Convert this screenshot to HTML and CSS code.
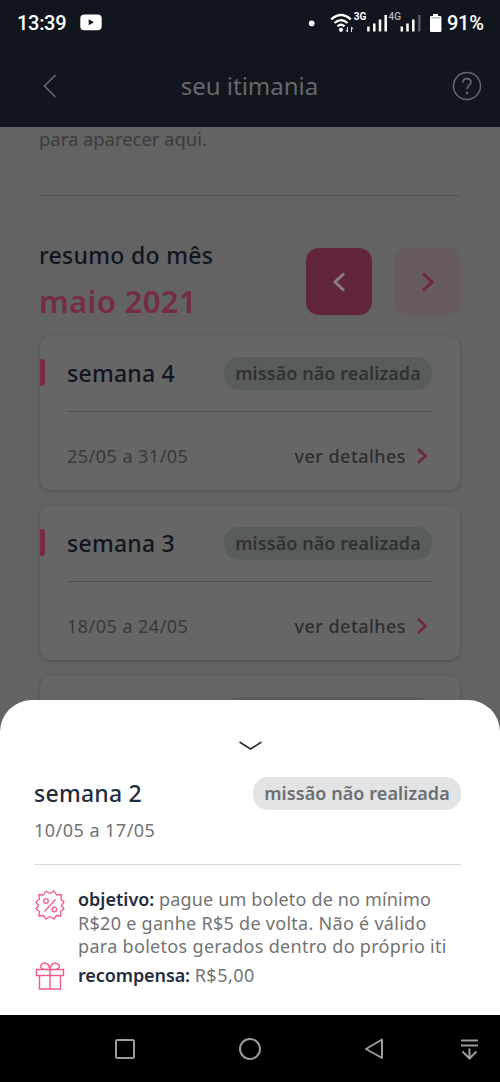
FILE: index.html
```html
<!DOCTYPE html>
<html lang="pt-BR">
<head>
<meta charset="utf-8">
<title>seu itimania</title>
<link rel="stylesheet" href="styles.css">
</head>
<body>
<div class="phone">
  <header class="top">
    <div class="status">
      <span class="clock">13:39</span>
      <svg class="yt" width="22" height="17" viewBox="0 0 22 17"><rect x=".3" y=".5" width="21.4" height="15.8" rx="4" fill="#fff"/><path d="M8.700 5.300v6l5.200-3z" fill="#11151d"/></svg>
      <svg class="signals" width="136" height="26" viewBox="308 9 136 26">
        <circle cx="311.700" cy="22.400" r="2.800" fill="#fff"/>
        <g fill="none" stroke="#fff" stroke-width="2.300"><path d="M331.300 18.300Q341 9.800 350.800 18.300M334.500 22Q341 16.200 347.500 22M337.500 25.300Q341 22.200 344.500 25.300"/></g>
        <circle cx="341" cy="28.800" r="2.100" fill="#fff"/>
        <path d="M347.500 26v5M351.500 31v-5M346 29l1.500 2M351.500 26l1.500 2" stroke="#ddd" stroke-width="1" fill="none"/>
        <text class="net net-strong" x="353.800" y="19">3G</text>
        <text class="net" x="388.500" y="19">4G</text>
        <path d="M368.400 30.500v-5M374.300 30.500v-8M380 30.500v-12M385.700 30.500v-16.500M401.800 30.500v-5M407.500 30.500v-8M413.300 30.500v-12" stroke="#fff" stroke-width="2.500"/>
        <path d="M419.300 30.500v-16.500" stroke="#555961" stroke-width="2.500"/>
        <path d="M433 13h5v2h2.200a1.200 1.200 0 0 1 1.200 1.200v13.600a1.200 1.200 0 0 1-1.200 1.200h-9a1.200 1.200 0 0 1-1.200-1.200V16.200a1.200 1.200 0 0 1 1.200-1.200h1.800z" fill="#fff"/><path d="M431.500 16.800h8.500" stroke="#777a80" stroke-width=".8"/>
      </svg>
      <span class="battery">91%</span>
    </div>
    <div class="appbar">
      <svg width="14" height="24" viewBox="0 0 14 24"><path d="M12.500 1L1.500 12l11 11" fill="none" stroke="#67696c" stroke-width="1.600"/></svg>
      <h1 class="title">seu itimania</h1>
      <svg width="30" height="30" viewBox="0 0 30 30" fill="none" stroke="#67696c" stroke-width="1.500"><circle cx="15" cy="15" r="13.500"/><path d="M11 11.500C11 6.300 19 6.300 19 11.300C19 14.300 15 14.200 15 18.200" stroke-width="1.700"/><circle cx="15" cy="22" r=".6"/></svg>
    </div>
  </header>

  <main class="page">
    <p class="intro">para aparecer aqui.</p>
    <section class="month">
      <div>
        <h2 class="summary">resumo do mês</h2>
        <p class="current">maio 2021</p>
      </div>
      <div class="pager">
        <button class="prev" aria-label="mês anterior"><svg width="14" height="20" viewBox="0 0 14 20"><path d="M12 1.500L3 10l9 8.500" fill="none" stroke="#8c7c83" stroke-width="3"/></svg></button>
        <button class="next" aria-label="próximo mês"><svg width="14" height="20" viewBox="0 0 14 20"><path d="M2 1.500L11 10l-9 8.500" fill="none" stroke="#702842" stroke-width="3"/></svg></button>
      </div>
    </section>
    <article class="card">
      <div class="card-head"><h3 class="week">semana 4</h3><span class="pill">missão não realizada</span></div>
      <div class="card-foot"><span class="dates">25/05 a 31/05</span><a class="details">ver detalhes<svg width="12" height="18" viewBox="0 0 12 18"><path d="M2 2l7.500 7L2 16" fill="none" stroke="#702842" stroke-width="2.700"/></svg></a></div>
    </article>
    <article class="card">
      <div class="card-head"><h3 class="week">semana 3</h3><span class="pill">missão não realizada</span></div>
      <div class="card-foot"><span class="dates">18/05 a 24/05</span><a class="details">ver detalhes<svg width="12" height="18" viewBox="0 0 12 18"><path d="M2 2l7.500 7L2 16" fill="none" stroke="#702842" stroke-width="2.700"/></svg></a></div>
    </article>
    <article class="card card-last"><div class="card-head"><span class="pill pill-blank"></span></div></article>
  </main>

  <section class="sheet">
    <svg class="handle" width="24" height="12" viewBox="0 0 24 12"><path d="M1 2l11 7 11-7" fill="none" stroke="#2b2b2b" stroke-width="1.500"/></svg>
    <div class="sheet-head"><h3 class="week">semana 2</h3><span class="pill">missão não realizada</span></div>
    <p class="dates sheet-dates">10/05 a 17/05</p>
    <div class="row goal">
      <svg class="seal" width="32" height="32" viewBox="0 0 32 32" fill="none" stroke="#ef5b91" stroke-width="1.300" stroke-linejoin="round"><path d="M16 4.500L20 2L22.700 6L27.500 5.500L27 10.300L30 13L27.500 16.500L30 20L26.500 22.500L27 27L22.500 26.500L20 30L16 27.500L12 30L9.500 26.500L4.800 27L5.500 22.500L2 20L4.500 16.500L2 13L5.500 10L4.800 5.500L9.500 6L12 2Z"/><path d="M21.500 10.500L10.500 22.500"/><circle cx="12" cy="12" r="2.300"/><circle cx="20.300" cy="20.500" r="2.300"/></svg>
      <p class="info"><b>objetivo:</b> <span class="line1">pague um boleto de no mínimo</span><br><span class="line2">R$20 e ganhe R$5 de volta. Não é válido</span><br><span class="line3">para boletos gerados dentro do próprio iti</span></p>
    </div>
    <div class="row">
      <svg class="gift" width="32" height="32" viewBox="0 0 32 32" fill="none" stroke="#ef5b91" stroke-width="1.400"><path d="M2.500 9.500h27v6h-27zM5.500 15.500v13.500h21v-13.500M16 9.500V29"/><path d="M16 9.500C8 10 5 8 7.500 4.500C11 1 15.500 4 16 9.500C16.500 4 21 1 24.500 4.500C27 8 24 10 16 9.500"/></svg>
      <p class="info reward"><b>recompensa:</b> <span class="prize">R$5,00</span></p>
    </div>
  </section>

  <nav class="nav">
    <svg width="500" height="67" viewBox="0 1015 500 67" fill="none" stroke="#9b9b9b" stroke-width="2"><rect x="116" y="1040" width="18" height="18" rx="1.500"/><circle cx="250" cy="1049" r="10"/><path d="M382 1039.500v18.500L366 1049z" stroke-linejoin="round"/><path d="M461 1040.500h17M461 1045.500h17M469.500 1048.500v10M462.500 1051.500l7 7 7-7"/></svg>
  </nav>
</div>
</body>
</html>
```
FILE: styles.css
```css
* { box-sizing: border-box; }
body, h1, h2, h3, p { margin: 0; }
body { font-family: "Noto Sans", sans-serif; background: #636363; }
.phone { position: relative; width: 500px; height: 1082px; overflow: hidden; display: flex; flex-direction: column; }
svg { display: block; flex: none; }

.top { height: 127px; background: #11151d; flex: none; }
.status { height: 45px; display: flex; align-items: center; padding: 0 17px; color: #fff; font: 500 20px/26px Roboto, sans-serif; }
.clock { width: 49px; white-space: nowrap; letter-spacing: -.3px; }
.yt { margin-left: 14px; }
.signals { margin-left: 206px; }
.net { font: 500 10px Roboto, sans-serif; fill: #b5b7ba; }
.net-strong { font-weight: 700; fill: #fff; }
.battery { margin-left: 3px; white-space: nowrap; letter-spacing: -.3px; }
.appbar { height: 82px; display: flex; align-items: center; padding: 0 18px 0 43px; }
.title { width: 386px; padding-bottom: 2px; text-align: center; font-size: 24px; font-weight: 400; color: #66686b; white-space: nowrap; }
.appbar svg:last-child { margin-left: 10px; }

.page { flex: 1; min-height: 0; overflow: hidden; padding: 0 39px; }
.intro { height: 69px; line-height: 24px; font-size: 18.500px; letter-spacing: -.05px; color: #3b3b3c; border-bottom: 1px solid #565656; }
.month { height: 140px; display: flex; justify-content: space-between; padding-top: 40px; }
.summary { margin-top: 3px; font-size: 23px; line-height: 32px; font-weight: 500; letter-spacing: .3px; color: #10151f; }
.current { font-size: 31px; line-height: 44px; margin-top: 8px; font-weight: 600; letter-spacing: .35px; color: #742c47; }
.pager { display: flex; gap: 22px; padding-top: 12px; }
.prev, .next { width: 67px; height: 67px; padding: 0; border: 0; border-radius: 13px; display: flex; align-items: center; justify-content: center; }
.prev { width: 66px; background: #61263d; }
.next { background: #685b60; }

.card { position: relative; height: 154px; margin: 0 1px 16px; padding: 0 27px; border-radius: 10px; background: #666; box-shadow: 0 1px 3px #4c4c4c; }
.card::before { content: ""; position: absolute; left: 0; top: 23px; width: 4.500px; height: 27px; background: #772b49; border-radius: 1px 3px 3px 1px; }
.card-last::before { display: none; }
.card-head { display: flex; justify-content: space-between; align-items: center; height: 76px; border-bottom: 1px solid #515151; }
.week { font-size: 23px; line-height: 32px; padding-bottom: 2px; font-weight: 500; letter-spacing: .25px; color: #10151f; white-space: nowrap; }
.pill { width: 208px; height: 33px; border-radius: 15px; background: #585d5b; color: #303132; font-size: 18px; line-height: 32px; font-weight: 600; letter-spacing: .08px; text-align: center; white-space: nowrap; }
.card .pill { margin-right: 1px; }
.pill-blank { margin-left: auto; }
.card-foot { display: flex; justify-content: space-between; align-items: center; height: 88px; }
.dates { font-size: 18px; letter-spacing: .47px; color: #38393a; white-space: nowrap; }
.details { display: flex; align-items: center; gap: 10px; margin-right: 5px; font-size: 18px; font-weight: 500; letter-spacing: .45px; color: #2d2e2f; white-space: nowrap; }

.sheet { position: absolute; left: 0; top: 700px; width: 100%; height: 315px; padding: 39px 39px 0 34px; border-radius: 32px 32px 0 0; background: #fff; }
.handle { margin: 0 auto; transform: translate(2.500px, 1px); }
.sheet-head { display: flex; justify-content: space-between; align-items: center; margin-top: 26px; height: 33px; }
.sheet .week { color: #242c40; }
.sheet .pill { background: #e3e4e6; color: #6c6e72; }
.sheet .dates { color: #737373; height: 55px; line-height: 41px; border-bottom: 1px solid #d8d8d8; }
.row { display: flex; align-items: flex-start; gap: 12px; }
.goal { margin-top: 23px; margin-bottom: 5px; }
.seal { margin-top: 1px; }
.gift { margin-top: -4px; }
.info { font-size: 18px; line-height: 23.500px; color: #737373; white-space: nowrap; }
.info b { font-weight: 600; color: #242c40; }
.line1 { letter-spacing: .17px; }
.line2 { letter-spacing: .28px; }
.line3 { letter-spacing: .31px; }
.reward b { letter-spacing: -.1px; }
.prize { letter-spacing: .5px; }
.nav { height: 67px; background: #000; flex: none; }
```
